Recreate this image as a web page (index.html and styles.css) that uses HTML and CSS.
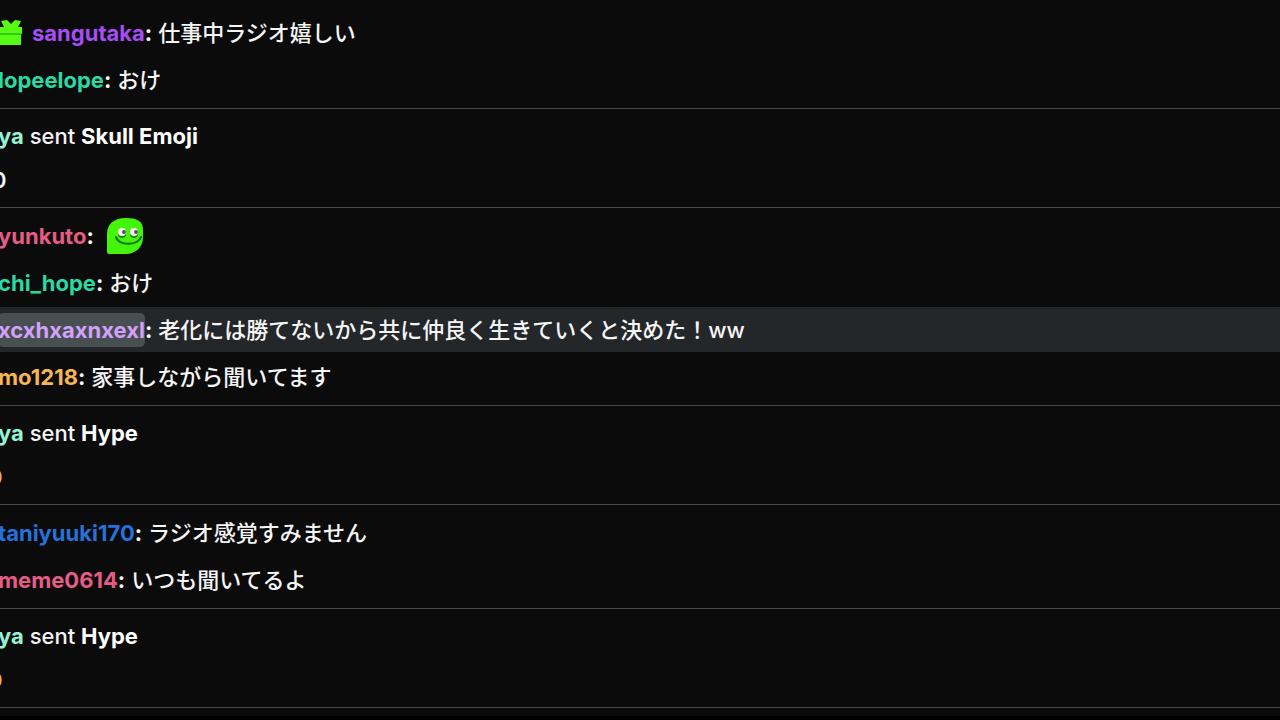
FILE: index.html
```html
<!DOCTYPE html>
<html lang="ja">
<head>
  <meta charset="UTF-8">
  <meta name="viewport" content="width=device-width, initial-scale=1.0">
  <title>Chat</title>
  <link rel="stylesheet" href="styles.css">
</head>
<body>
  <main class="chat">
    <div class="messages">
      <div class="message">
        <svg class="badge" viewBox="0 0 24 26" aria-hidden="true">
          <path fill="#58fb14" d="M3 1l6-1 4 4 4-4 6 1-3 6h4v7H0V7h6z"/>
          <path fill="#36c80c" d="M1 13h22v2H1z"/>
          <path fill="#58fb14" d="M1 15h22v10H1z"/>
        </svg>
        <button type="button" class="name purple">sangutaka</button><span class="colon">:</span>
        <span class="text">仕事中ラジオ嬉しい</span>
      </div>
      <div class="message">
        <button type="button" class="name green">lopeelope</button><span class="colon">:</span>
        <span class="text">おけ</span>
      </div>
    </div>

    <div class="event">
      <p><button type="button" class="name mint">ya</button> sent <b>Skull Emoji</b></p>
      <p class="amount">0</p>
    </div>

    <div class="messages">
      <div class="message">
        <button type="button" class="name pink">yunkuto</button><span class="colon">:</span>
        <svg class="emote" viewBox="0 0 38 38" role="img" aria-label="emote">
          <path fill="#43f50b" d="M1 35V17C1 7 8 1 20 1c11 0 17 3 17 12v8c0 9-8 16-17 16H3q-2 0-2-2z"/>
          <path fill="none" stroke="#176f08" stroke-width="2" stroke-linecap="round" d="M10 20c2 9 22 9 25 0"/>
          <ellipse cx="16" cy="17" rx="4" ry="4" fill="#26820f"/>
          <ellipse cx="28" cy="17" rx="4" ry="4" fill="#26820f"/>
          <circle cx="16" cy="15" r="4" fill="#f4f4ee"/>
          <circle cx="28" cy="15" r="4" fill="#f4f4ee"/>
          <circle cx="18" cy="15" r="2" fill="#555"/>
          <circle cx="30" cy="15" r="2" fill="#555"/>
        </svg>
      </div>
      <div class="message">
        <button type="button" class="name green">chi_hope</button><span class="colon">:</span>
        <span class="text">おけ</span>
      </div>
      <div class="message active">
        <button type="button" class="name lilac">xcxhxaxnxexl</button><span class="colon">:</span>
        <span class="text">老化には勝てないから共に仲良く生きていくと決めた！ww</span>
      </div>
      <div class="message">
        <button type="button" class="name orange">mo1218</button><span class="colon">:</span>
        <span class="text">家事しながら聞いてます</span>
      </div>
    </div>

    <div class="event">
      <p><button type="button" class="name mint">ya</button> sent <b>Hype</b></p>
      <p class="amount gold">0</p>
    </div>

    <div class="messages">
      <div class="message">
        <button type="button" class="name blue">taniyuuki170</button><span class="colon">:</span>
        <span class="text">ラジオ感覚すみません</span>
      </div>
      <div class="message">
        <button type="button" class="name pink">meme0614</button><span class="colon">:</span>
        <span class="text">いつも聞いてるよ</span>
      </div>
    </div>

    <div class="event">
      <p><button type="button" class="name mint">ya</button> sent <b>Hype</b></p>
      <p class="amount gold">0</p>
    </div>
  </main>
</body>
</html>
```

FILE: styles.css
```css
body {
  margin: 0;
  background: #000;
  color: #f5f5f5;
  font-family: Inter, "Noto Sans CJK JP", sans-serif;
  font-size: 22px;
  font-weight: 500;
  overflow: hidden;
}

.chat {
  background: #0b0b0b;
  padding: 5px 0 8px;
}

.messages {
  display: flex;
  flex-direction: column;
  gap: 2px;
  padding: 5px 0 6px;
}

.message {
  display: flex;
  align-items: center;
  height: 45px;
  line-height: 34px;
  white-space: nowrap;
}

.active {
  background: #24272a;
}

.name {
  margin: 0 0 0 -2px;
  padding: 0;
  border: 0;
  border-radius: 5px;
  background: none;
  font: inherit;
  font-weight: 700;
  line-height: 34px;
  cursor: pointer;
}

.active .name {
  background: #474f50;
}

.colon {
  font-weight: 700;
}

.text {
  margin-left: 6px;
}

.badge {
  width: 24px;
  height: 26px;
  margin: 0 12px 0 -2px;
}

.emote {
  width: 38px;
  height: 38px;
  margin-left: 12px;
}

.event {
  border-top: 1px solid #4a4a4a;
  border-bottom: 1px solid #4a4a4a;
  padding: 5px 0;
}

.event p {
  margin: 0;
  line-height: 44px;
}

.event b {
  font-weight: 700;
  color: #fff;
}

.event .amount {
  margin-left: -8px;
  font-weight: 600;
}

.event .gold {
  margin-left: -12px;
  color: #f0b45c;
}

.purple { color: #a64df5; }
.green { color: #2bd9a5; }
.mint { color: #93f5d6; }
.pink { color: #e55c86; }
.lilac { color: #d3a0fb; }
.orange { color: #f5b657; }
.blue { color: #2671dc; }
```
